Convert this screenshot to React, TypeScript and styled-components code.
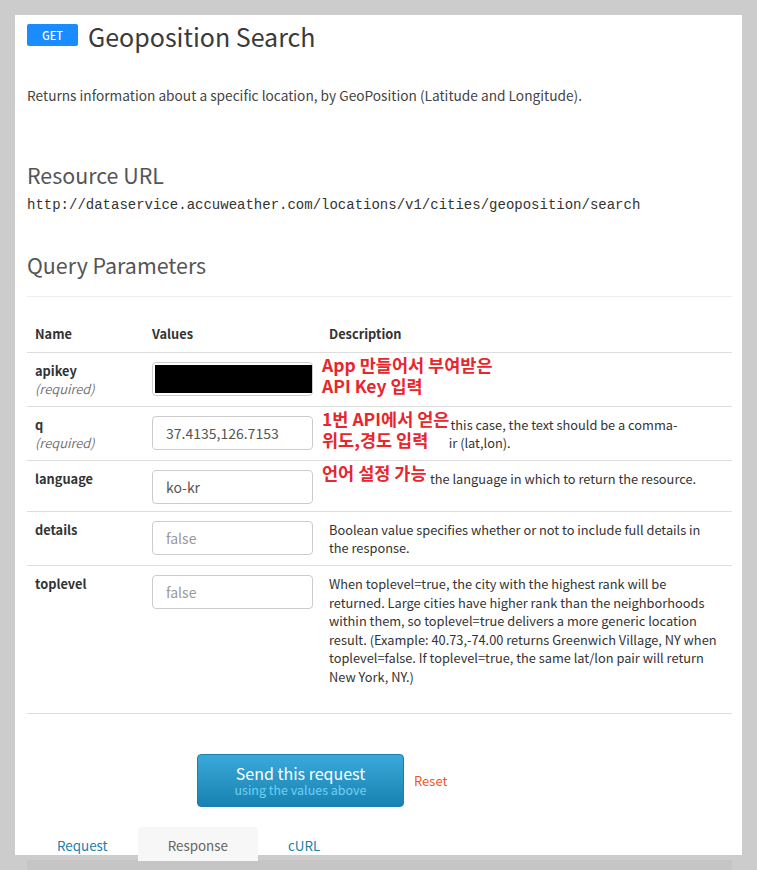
import React from "react";
import styled, { createGlobalStyle } from "styled-components";

const GlobalStyle = createGlobalStyle`
  body {
    margin: 0;
    background: #cccccc;
    font-family: "Noto Sans CJK KR", "Noto Sans", sans-serif;
    color: #333;
  }
`;

const Page = styled.div`
  padding: 15px 15px 0;
`;

const Panel = styled.div`
  background: #fff;
  width: 727px;
  height: 840px;
  box-sizing: border-box;
  padding: 0 10px 0 12px;
  display: flex;
  flex-direction: column;
`;

const Header = styled.div`
  display: flex;
  align-items: center;
  gap: 10px;
  height: 42px;
`;

const MethodBadge = styled.span`
  display: inline-flex;
  align-items: center;
  justify-content: center;
  width: 51px;
  height: 22px;
  margin-top: -2px;
  border-radius: 2px;
  background: #1a8cff;
  color: #fff;
  font-size: 11px;
  font-weight: 500;
`;

const Title = styled.h1`
  margin: 0;
  font-size: 25px;
  font-weight: 400;
  color: #3a3a3a;
  line-height: 42px;
`;

const Summary = styled.p`
  margin: 28px 0 0;
  font-size: 13.7px;
  line-height: 20px;
  color: #444;
`;

const SectionTitle = styled.h3<{ $top: number }>`
  margin: ${(p) => p.$top}px 0 0;
  font-size: 21.4px;
  font-weight: 400;
  line-height: 28px;
  color: #555;
`;

const Url = styled.code`
  display: block;
  margin-top: 6px;
  font-family: "Liberation Mono", monospace;
  font-size: 14px;
  line-height: 20px;
  color: #333;
`;

const Rule = styled.hr`
  margin: 17px 0 20px;
  border: 0;
  border-top: 1px solid #eee;
`;

const Table = styled.div`
  border-bottom: 1px solid #ddd;
  font-size: 12.8px;
  line-height: 18.57px;
`;

const Row = styled.div<{ $head?: boolean; $last?: boolean }>`
  display: grid;
  grid-template-columns: 117px 177px 1fr;
  border-bottom: ${(p) => (p.$head ? "1px solid #ddd" : "0")};
  border-top: ${(p) => (p.$head ? "0" : "1px solid #ddd")};
  &:nth-child(2) {
    border-top: 0;
  }
  font-weight: ${(p) => (p.$head ? 700 : 400)};
  padding-bottom: ${(p) => (p.$last ? "20px" : "0")};
`;

const Cell = styled.div<{ $head?: boolean; $wide?: boolean }>`
  position: relative;
  padding: ${(p) => (p.$head ? "8px" : "9px 8px 7px")};
  padding-right: ${(p) => (p.$wide ? "14px" : "8px")};
  color: #333;
`;

const ParamName = styled.div`
  font-weight: 700;
  color: #333;
`;

const Required = styled.div`
  font-style: italic;
  color: #777;
`;

const Input = styled.input`
  display: block;
  width: 100%;
  height: 34px;
  box-sizing: border-box;
  padding: 6px 13px;
  border: 1px solid #ccc;
  border-radius: 4px;
  font-family: inherit;
  font-size: 14px;
  color: #555;
  &::placeholder {
    color: #999;
  }
`;

const Redaction = styled.div`
  position: absolute;
  left: 11px;
  top: 12px;
  width: 157px;
  height: 28px;
  background: #000;
`;

const Note = styled.div`
  position: absolute;
  left: 1px;
  top: 1px;
  padding-bottom: 4px;
  background: #fff;
  color: #e8262d;
  font-size: 17.5px;
  font-weight: 700;
  line-height: 21px;
  white-space: nowrap;
`;

const Actions = styled.div`
  display: flex;
  align-items: center;
  margin: 40px 0 0 170px;
  gap: 10px;
`;

const SendButton = styled.button`
  width: 207px;
  height: 53px;
  padding: 0;
  border: 1px solid #1a7fae;
  border-radius: 4px;
  background: linear-gradient(#3aa9d9, #1882b2);
  color: #fff;
  font-family: inherit;
  display: flex;
  flex-direction: column;
  align-items: center;
  justify-content: center;
  cursor: pointer;
`;

const SendLabel = styled.span`
  font-size: 16px;
  line-height: 18px;
`;

const SendHint = styled.span`
  font-size: 12.5px;
  line-height: 15px;
  color: #6fcff5;
`;

const ResetLink = styled.a`
  font-size: 13px;
  color: #f0582a;
  text-decoration: none;
`;

const Tabs = styled.div`
  display: flex;
  margin-top: 20px;
`;

const Tab = styled.a<{ $active?: boolean }>`
  padding: 0 30px;
  height: 34px;
  line-height: 36px;
  font-size: 13.4px;
  border-radius: 4px 4px 0 0;
  text-decoration: none;
  background: ${(p) => (p.$active ? "#f7f7f7" : "transparent")};
  color: ${(p) => (p.$active ? "#666" : "#1a7fb0")};
`;

const Below = styled.div`
  margin: 5px 10px 0 12px;
  height: 20px;
  background: #c5c5c5;
`;

type Param = {
  name: string;
  required?: boolean;
  value?: string;
  placeholder?: string;
  description: string;
  note?: string[];
  redacted?: boolean;
};

const params: Param[] = [
  {
    name: "apikey",
    required: true,
    description: "",
    note: ["App 만들어서 부여받은", "API Key 입력"],
    redacted: true,
  },
  {
    name: "q",
    required: true,
    value: "37.4135,126.7153",
    description:
      "Text to search for. In this case, the text should be a comma-separated lat/lon pair (lat,lon).",
    note: ["1번 API에서 얻은", "위도,경도 입력"],
  },
  {
    name: "language",
    value: "ko-kr",
    description: "String indicating the language in which to return the resource.",
    note: ["언어 설정 가능"],
  },
  {
    name: "details",
    placeholder: "false",
    description:
      "Boolean value specifies whether or not to include full details in the response.",
  },
  {
    name: "toplevel",
    placeholder: "false",
    description:
      "When toplevel=true, the city with the highest rank will be returned. Large cities have higher rank than the neighborhoods within them, so toplevel=true delivers a more generic location result. (Example: 40.73,-74.00 returns Greenwich Village, NY when toplevel=false. If toplevel=true, the same lat/lon pair will return New York, NY.)",
  },
];

export default function App() {
  return (
    <>
      <GlobalStyle />
      <Page>
        <Panel>
          <Header>
            <MethodBadge>GET</MethodBadge>
            <Title>Geoposition Search</Title>
          </Header>
          <Summary>
            Returns information about a specific location, by GeoPosition (Latitude and Longitude).
          </Summary>

          <SectionTitle $top={56}>Resource URL</SectionTitle>
          <Url>http://dataservice.accuweather.com/locations/v1/cities/geoposition/search</Url>

          <SectionTitle $top={36}>Query Parameters</SectionTitle>
          <Rule />

          <Table>
            <Row $head>
              <Cell $head>Name</Cell>
              <Cell $head>Values</Cell>
              <Cell $head>Description</Cell>
            </Row>
            {params.map((p, i) => (
              <Row key={p.name} $last={i === params.length - 1}>
                <Cell>
                  <ParamName>{p.name}</ParamName>
                  {p.required && <Required>(required)</Required>}
                </Cell>
                <Cell>
                  <Input defaultValue={p.value} placeholder={p.placeholder} />
                  {p.redacted && <Redaction />}
                </Cell>
                <Cell $wide>
                  {p.description}
                  {p.note && (
                    <Note>
                      {p.note.map((line) => (
                        <div key={line}>{line}</div>
                      ))}
                    </Note>
                  )}
                </Cell>
              </Row>
            ))}
          </Table>

          <Actions>
            <SendButton>
              <SendLabel>Send this request</SendLabel>
              <SendHint>using the values above</SendHint>
            </SendButton>
            <ResetLink href="#">Reset</ResetLink>
          </Actions>

          <Tabs>
            <Tab href="#">Request</Tab>
            <Tab href="#" $active>
              Response
            </Tab>
            <Tab href="#">cURL</Tab>
          </Tabs>
        </Panel>
        <Below />
      </Page>
    </>
  );
}
